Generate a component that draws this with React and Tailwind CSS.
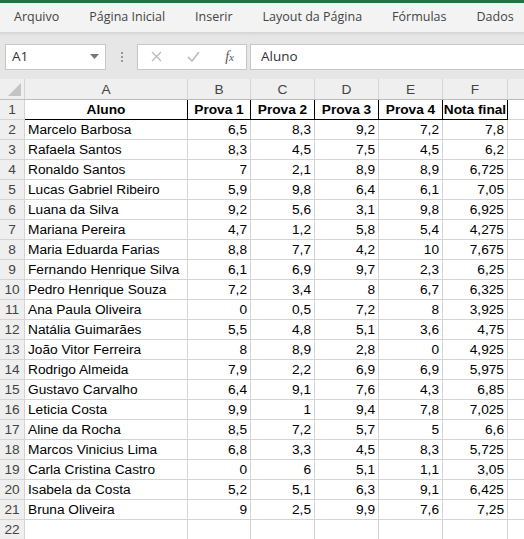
import React from "react";

const tabs = ["Arquivo", "Página Inicial", "Inserir", "Layout da Página", "Fórmulas", "Dados"];

const cols = [
  { l: "A", w: "w-[163px]" },
  { l: "B", w: "w-[63px]" },
  { l: "C", w: "w-[64px]" },
  { l: "D", w: "w-[64px]" },
  { l: "E", w: "w-[64px]" },
  { l: "F", w: "w-[65px]" },
];

const heads = ["Aluno", "Prova 1", "Prova 2", "Prova 3", "Prova 4", "Nota final"];

const rows = [
  ["Marcelo Barbosa", "6,5", "8,3", "9,2", "7,2", "7,8"],
  ["Rafaela Santos", "8,3", "4,5", "7,5", "4,5", "6,2"],
  ["Ronaldo Santos", "7", "2,1", "8,9", "8,9", "6,725"],
  ["Lucas Gabriel Ribeiro", "5,9", "9,8", "6,4", "6,1", "7,05"],
  ["Luana da Silva", "9,2", "5,6", "3,1", "9,8", "6,925"],
  ["Mariana Pereira", "4,7", "1,2", "5,8", "5,4", "4,275"],
  ["Maria Eduarda Farias", "8,8", "7,7", "4,2", "10", "7,675"],
  ["Fernando Henrique Silva", "6,1", "6,9", "9,7", "2,3", "6,25"],
  ["Pedro Henrique Souza", "7,2", "3,4", "8", "6,7", "6,325"],
  ["Ana Paula Oliveira", "0", "0,5", "7,2", "8", "3,925"],
  ["Natália Guimarães", "5,5", "4,8", "5,1", "3,6", "4,75"],
  ["João Vitor Ferreira", "8", "8,9", "2,8", "0", "4,925"],
  ["Rodrigo Almeida", "7,9", "2,2", "6,9", "6,9", "5,975"],
  ["Gustavo Carvalho", "6,4", "9,1", "7,6", "4,3", "6,85"],
  ["Leticia Costa", "9,9", "1", "9,4", "7,8", "7,025"],
  ["Aline da Rocha", "8,5", "7,2", "5,7", "5", "6,6"],
  ["Marcos Vinicius Lima", "6,8", "3,3", "4,5", "8,3", "5,725"],
  ["Carla Cristina Castro", "0", "6", "5,1", "1,1", "3,05"],
  ["Isabela da Costa", "5,2", "5,1", "6,3", "9,1", "6,425"],
  ["Bruna Oliveira", "9", "2,5", "9,9", "7,6", "7,25"],
];

const ui = { fontFamily: '"Open Sans", "Noto Sans", sans-serif' };
const cell = { fontFamily: '"Liberation Sans", Arial, sans-serif' };

export default function App() {
  return (
    <div className="w-[524px] h-[539px] overflow-hidden bg-white" style={ui}>
      <div className="h-[3px] bg-[#217346]" />

      {/* abas */}
      <div className="h-[29px] bg-[#f3f3f3] flex items-center text-[12.5px] text-[#444] pl-[14px] gap-[30px] whitespace-nowrap">
        {tabs.map((t) => (
          <span key={t}>{t}</span>
        ))}
      </div>
      <div className="h-[4px] bg-gradient-to-b from-[#d4d4d4] to-[#e6e6e6]" />

      {/* barra de fórmulas */}
      <div className="h-[43px] bg-[#e6e6e6] flex items-center pl-[5px] pb-[2px]">
        <div className="w-[101px] h-[26px] bg-white border border-[#c6c6c6] flex items-center justify-between pl-[6px] pr-[6px] text-[13.5px] text-[#333]">
          <span>A1</span>
          <svg width="9" height="5" viewBox="0 0 9 5">
            <path d="M0 0h9L4.5 5z" fill="#777" />
          </svg>
        </div>
        <div className="w-[31px] flex flex-col items-center gap-[2px]">
          <span className="w-[2px] h-[2px] bg-[#999]" />
          <span className="w-[2px] h-[2px] bg-[#999]" />
          <span className="w-[2px] h-[2px] bg-[#999]" />
        </div>
        <div className="w-[110px] h-[26px] bg-white border border-[#c6c6c6] flex items-center justify-between pl-[13px] pr-[12px]">
          <svg width="11" height="11" viewBox="0 0 11 11">
            <path d="M1 1l9 9M10 1l-9 9" stroke="#b8b8b8" strokeWidth="1.2" />
          </svg>
          <svg width="13" height="11" viewBox="0 0 13 11">
            <path d="M1 6l4 4 7-9" stroke="#b8b8b8" strokeWidth="1.5" fill="none" />
          </svg>
          <span className="italic text-[14px] text-[#555]" style={{ fontFamily: '"Liberation Serif", serif' }}>
            f<span className="text-[11px]">x</span>
          </span>
        </div>
        <div className="flex-1 h-[26px] ml-[3px] bg-white border-y border-l border-[#c6c6c6] flex items-center pl-[10px] text-[13.5px] text-[#333]">
          Aluno
        </div>
      </div>

      {/* planilha */}
      <div style={cell} className="text-[13.7px] text-black">
        <div className="flex h-[21px] bg-[#efefef] border-b border-[#bcbcbc] text-[#444]">
          <div className="w-[25px] border-r border-[#d4d4d4] relative">
            <svg className="absolute right-[3px] bottom-[3px]" width="13" height="13" viewBox="0 0 13 13">
              <path d="M13 0v13H0z" fill="#c4c4c4" />
            </svg>
          </div>
          {cols.map((c) => (
            <div key={c.l} className={`${c.w} shrink-0 border-r border-[#d4d4d4] flex items-center justify-center pt-[2px]`}>
              {c.l}
            </div>
          ))}
          <div className="flex-1" />
        </div>

        <div className="flex h-[20px]">
          <div className="w-[25px] shrink-0 bg-[#efefef] border-r border-b border-[#d4d4d4] text-[#444] flex items-center justify-center pt-[2px]">1</div>
          {cols.map((c, i) => (
            <div key={c.l} className={`${c.w} shrink-0 border-r border-b border-black flex items-center justify-center font-bold pt-[2px]`}>
              {heads[i]}
            </div>
          ))}
          <div className="flex-1 border-b border-[#d4d4d4]" />
        </div>

        {rows.map((r, ri) => (
          <div key={ri} className="flex h-[20px]">
            <div className="w-[25px] shrink-0 bg-[#efefef] border-r border-b border-[#d4d4d4] text-[#444] flex items-center justify-center pt-[2px]">
              {ri + 2}
            </div>
            {cols.map((c, i) => (
              <div
                key={c.l}
                className={`${c.w} shrink-0 border-r border-b border-[#d4d4d4] flex items-center px-[3px] pt-[2px] whitespace-nowrap ${i === 0 ? "justify-start" : "justify-end"}`}
              >
                {r[i]}
              </div>
            ))}
            <div className="flex-1 border-b border-[#d4d4d4]" />
          </div>
        ))}

        <div className="flex h-[20px]">
          <div className="w-[25px] shrink-0 bg-[#efefef] border-r border-b border-[#d4d4d4] text-[#444] flex items-center justify-center pt-[2px]">22</div>
          {cols.map((c) => (
            <div key={c.l} className={`${c.w} shrink-0 border-r border-b border-[#d4d4d4]`} />
          ))}
          <div className="flex-1 border-b border-[#d4d4d4]" />
        </div>
      </div>
    </div>
  );
}
